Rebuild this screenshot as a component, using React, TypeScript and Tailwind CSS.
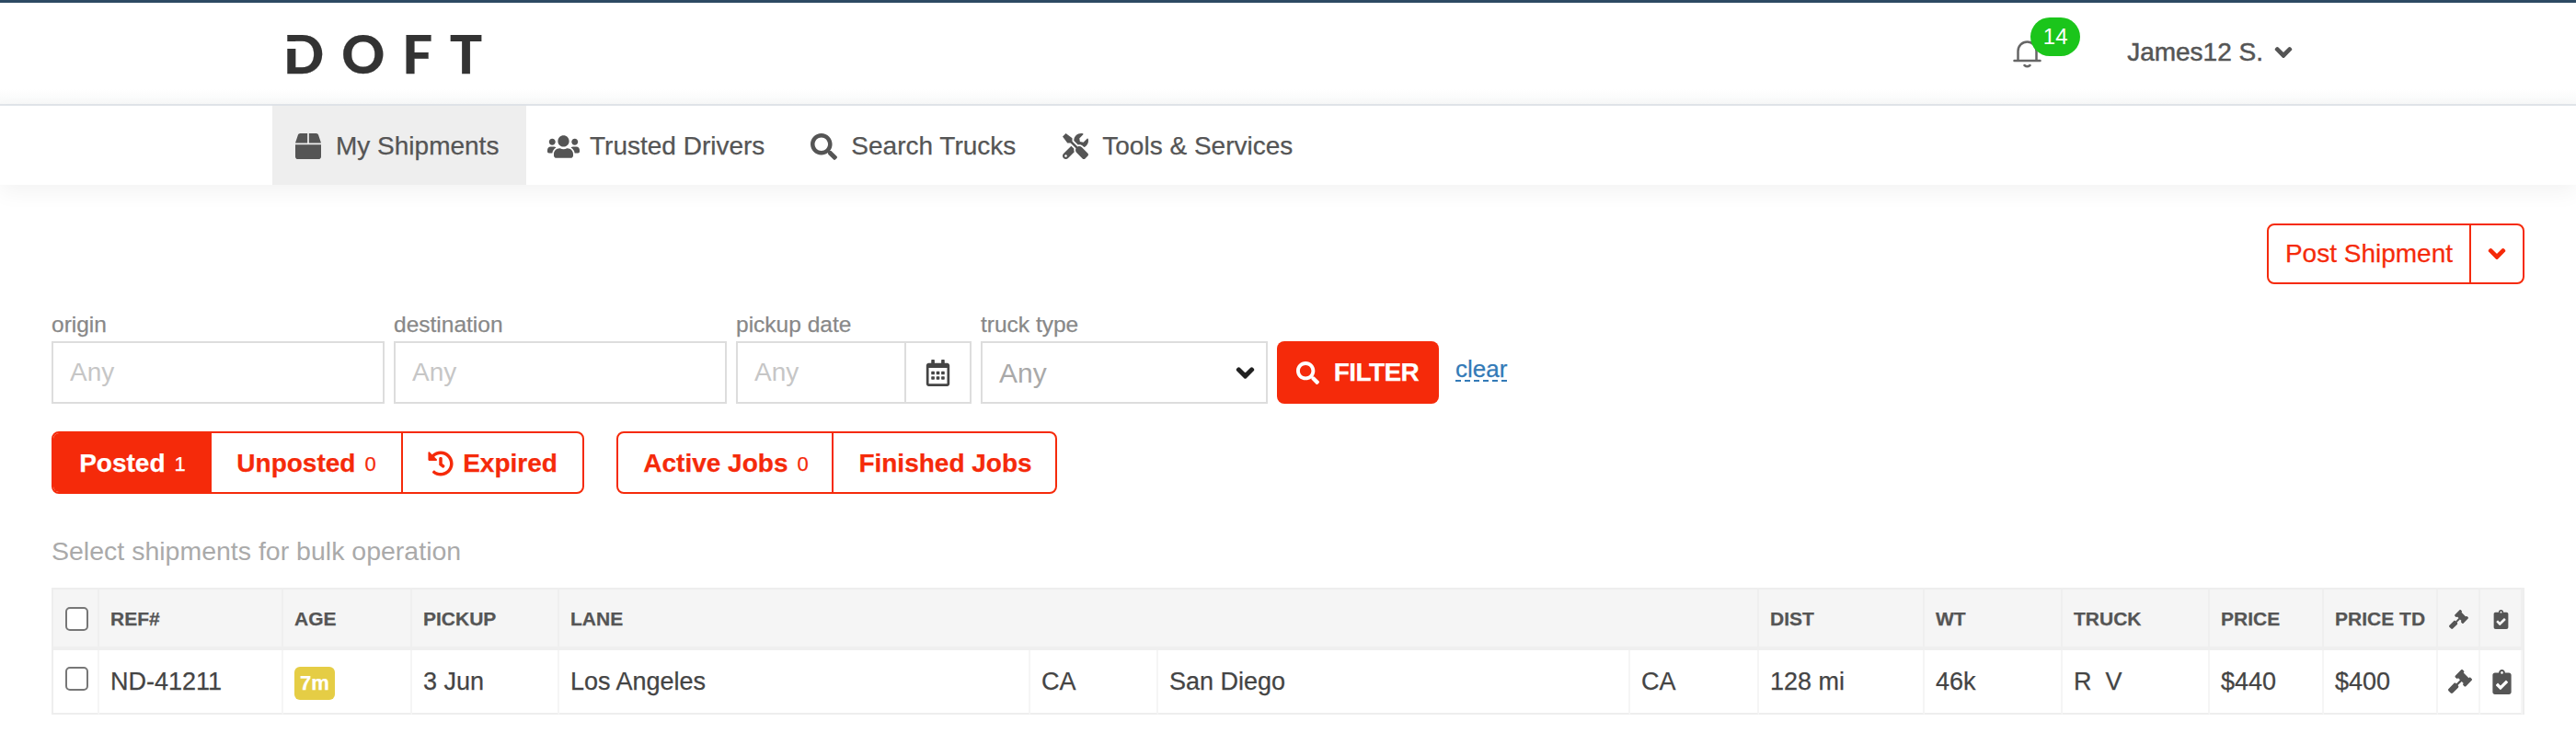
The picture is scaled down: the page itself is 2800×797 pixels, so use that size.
import { FaBox, FaUsers, FaSearch, FaTools, FaChevronDown, FaHistory, FaGavel, FaClipboardCheck, FaRegCalendarAlt } from "react-icons/fa";

const widths = ["w-[50px]", "w-[200px]", "w-[140px]", "w-[160px]", "w-[512px]", "w-[139px]", "w-[513px]", "w-[140px]", "w-[180px]", "w-[150px]", "w-[160px]", "w-[124px]", "w-[124px]", "w-[46px]", "w-[46px]"];

function Th({ children, span }: { children?: React.ReactNode; span?: number }) {
  return (
    <th colSpan={span} className="h-[66px] border-r-2 border-b-4 border-[#efefef] bg-[#f5f5f5] pt-[2px] pl-[12px] text-left align-middle text-[21px] font-bold whitespace-nowrap text-[#555]">
      {children}
    </th>
  );
}

function Td({ children }: { children?: React.ReactNode }) {
  return (
    <td className="h-[70px] border-r-2 border-b-2 border-r-[#f5f5f5] border-b-[#eeeeee] pl-[12px] align-middle text-[27px] whitespace-nowrap text-[#444]">
      {children}
    </td>
  );
}

function Field({ label, className, children }: { label: string; className: string; children: React.ReactNode }) {
  return (
    <div className={className}>
      <div className="mb-[4px] h-[28px] text-[24.500px] leading-[28px] text-[#888]">{label}</div>
      {children}
    </div>
  );
}

const inputClass = "h-[68px] w-full border-2 border-[#dddddd] bg-white px-[18px] text-[28px] outline-none [-webkit-text-stroke:0] placeholder:text-[#c6c6c6]";
const segClass = "flex h-full items-center justify-center pt-[2px] text-[28px] font-bold";

export default function App() {
  return (
    <div className="min-h-[797px] w-full overflow-hidden bg-white font-['Liberation_Sans','Arial',sans-serif] [-webkit-text-stroke:0.25px]">
      <header className="flex h-[115px] items-center justify-between border-t-[3px] border-b-2 border-t-[#2d4a63] border-b-[#e1e5ea] bg-[linear-gradient(to_bottom,#ffffff_85%,#f8f9f9_100%)] pr-[308px] pl-[308px]">
        <div className="relative font-['Lato','Liberation_Sans',sans-serif] text-[58px] leading-none font-black tracking-[19px] text-[#333]">
          DOFT
          <span className="absolute top-[16px] left-[0px] h-[8px] w-[18px] bg-white" />
        </div>
        <div className="flex items-center gap-[93px]">
          <div className="relative mt-[1px] h-[30px] w-[31px]">
            <svg viewBox="0 0 31 30" className="h-[30px] w-[31px]" fill="none" stroke="#666" strokeWidth="2.5" strokeLinecap="round">
              <path d="M5.500 21V11.500a10 10 0 0 1 20 0V21" />
              <path d="M1.500 22h28" />
              <path d="M12.500 27q3 2.500 6 0" />
            </svg>
            <span className="absolute top-[-25px] left-[19px] flex h-[42px] w-[54px] items-center justify-center rounded-[21px] bg-[#1bc51b] text-[24px] text-white [-webkit-text-stroke:0]">14</span>
          </div>
          <div className="mb-[3px] flex items-center gap-[12px] text-[28px] text-[#555]">
            <span className="[-webkit-text-stroke:0.5px_#555]">James12 S.</span>
            <FaChevronDown size={20} stroke="currentColor" strokeWidth={40} />
          </div>
        </div>
      </header>

      <nav className="relative flex h-[86px] items-stretch bg-white pl-[296px] text-[28px] text-[#555] shadow-[0_8px_22px_rgba(0,0,0,0.05)]">
        <div className="flex w-[276px] items-center gap-[16px] bg-[#eeeeee] pt-[2px] pl-[25px]"><FaBox size={28} /><span>My Shipments</span></div>
        <div className="flex items-center gap-[11px] pt-[2px] pr-[25px] pl-[23px]"><FaUsers size={35} /><span>Trusted Drivers</span></div>
        <div className="flex items-center gap-[15px] px-[25px] pt-[2px]"><FaSearch size={29} /><span>Search Trucks</span></div>
        <div className="flex items-center gap-[15px] px-[26px] pt-[2px]"><FaTools size={28} /><span>Tools &amp; Services</span></div>
      </nav>

      <main className="px-[56px]">
        <div className="flex justify-end pt-[42px]">
          <div className="flex h-[66px] items-center rounded-lg border-2 border-[#f52a0a] text-[28px] text-[#f52a0a]">
            <span className="flex h-full w-[220px] items-center justify-center border-r-2 border-[#f52a0a]">Post Shipment</span>
            <span className="flex h-full w-[56px] items-center justify-center"><FaChevronDown size={20} stroke="currentColor" strokeWidth={40} /></span>
          </div>
        </div>

        <div className="mt-[30px] flex items-end gap-[10px]">
          <Field label="origin" className="w-[362px]"><input className={inputClass} placeholder="Any" /></Field>
          <Field label="destination" className="w-[362px]"><input className={inputClass} placeholder="Any" /></Field>
          <Field label="pickup date" className="w-[256px]">
            <div className="flex h-[68px] border-2 border-[#dddddd]">
              <input className="w-[181px] bg-white px-[18px] text-[28px] outline-none [-webkit-text-stroke:0] placeholder:text-[#c6c6c6]" placeholder="Any" />
              <div className="flex flex-1 items-center justify-center border-l-2 border-[#dddddd] text-[#444]"><FaRegCalendarAlt size={29} /></div>
            </div>
          </Field>
          <Field label="truck type" className="w-[312px]">
            <div className="flex h-[68px] items-center justify-between border-2 border-[#dddddd] pr-[12px] pl-[18px] text-[30px] text-[#a9a9a9] [-webkit-text-stroke:0]">
              <span>Any</span>
              <FaChevronDown size={21} className="text-[#222]" stroke="currentColor" strokeWidth={40} />
            </div>
          </Field>
          <button className="flex h-[68px] w-[176px] items-center justify-center gap-[16px] rounded-lg bg-[#f52a0a] pr-[1px] text-[28px] font-bold tracking-[-0.6px] text-white">
            <FaSearch size={25} />
            <span>FILTER</span>
          </button>
          <a className="mb-[24px] ml-[8px] border-b-2 border-dashed border-[#337ab7] text-[26px] leading-[24px] text-[#337ab7]">clear</a>
        </div>

        <div className="mt-[30px] flex gap-[35px]">
          <div className="flex h-[68px] overflow-hidden rounded-lg border-2 border-[#f52a0a] text-[#f52a0a]">
            <div className={`${segClass} w-[172px] gap-[10px] bg-[#f52a0a] text-white`}>Posted <span className="text-[22px] font-normal">1</span></div>
            <div className={`${segClass} w-[208px] gap-[10px] border-r-2 border-[#f52a0a]`}>Unposted <span className="text-[22px] font-normal">0</span></div>
            <div className={`${segClass} w-[195px] gap-[10px]`}><FaHistory size={28} /> Expired</div>
          </div>
          <div className="flex h-[68px] overflow-hidden rounded-lg border-2 border-[#f52a0a] text-[#f52a0a]">
            <div className={`${segClass} w-[234px] gap-[10px] border-r-2 border-[#f52a0a] pl-[2px]`}>Active Jobs <span className="text-[22px] font-normal">0</span></div>
            <div className={`${segClass} w-[241px] pl-[2px]`}>Finished Jobs</div>
          </div>
        </div>

        <div className="mt-[44px] text-[28.500px] leading-[36px] text-[#aaaaaa] [-webkit-text-stroke:0]">Select shipments for bulk operation</div>

        <div className="mt-[22px] border-x-2 border-t-2 border-[#eeeeee]">
          <table className="w-full table-fixed border-separate border-spacing-0">
            <colgroup>
              {widths.map((w, i) => <col key={i} className={w} />)}
            </colgroup>
            <thead>
              <tr>
                <Th><input type="checkbox" className="ml-[1px] block h-[26px] w-[25px] appearance-none rounded-[5px] border-2 border-[#777] bg-white" /></Th>
                <Th>REF#</Th>
                <Th>AGE</Th>
                <Th>PICKUP</Th>
                <Th span={4}>LANE</Th>
                <Th>DIST</Th>
                <Th>WT</Th>
                <Th>TRUCK</Th>
                <Th>PRICE</Th>
                <Th>PRICE TD</Th>
                <Th><FaGavel size={21} /></Th>
                <Th><FaClipboardCheck size={21} /></Th>
              </tr>
            </thead>
            <tbody>
              <tr>
                <Td><input type="checkbox" className="mb-[6px] ml-[1px] block h-[26px] w-[25px] appearance-none rounded-[5px] border-2 border-[#777] bg-white" /></Td>
                <Td>ND-41211</Td>
                <Td><span className="mt-[3px] flex h-[36px] w-[44px] items-center justify-center rounded-md bg-[#e5cd45] text-[22px] font-bold text-white">7m</span></Td>
                <Td>3 Jun</Td>
                <Td>Los Angeles</Td>
                <Td>CA</Td>
                <Td>San Diego</Td>
                <Td>CA</Td>
                <Td>128 mi</Td>
                <Td>46k</Td>
                <Td>R&nbsp;&nbsp;V</Td>
                <Td>$440</Td>
                <Td>$400</Td>
                <Td><FaGavel size={26} className="-ml-[1px] text-[#555]" /></Td>
                <Td><FaClipboardCheck size={27} className="-ml-[2px] text-[#555]" /></Td>
              </tr>
            </tbody>
          </table>
        </div>
      </main>
    </div>
  );
}
